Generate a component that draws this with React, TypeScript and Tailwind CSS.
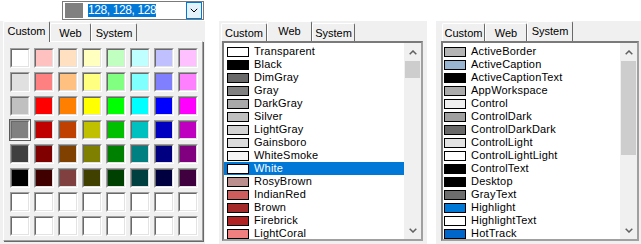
import React from "react";

const W = "#ffffff";
const customRows: string[][] = [
  ["#ffffff", "#ffc0c0", "#ffe0c0", "#ffffc0", "#c0ffc0", "#c0ffff", "#c0c0ff", "#ffc0ff"],
  ["#e0e0e0", "#ff8080", "#ffc080", "#ffff80", "#80ff80", "#80ffff", "#8080ff", "#ff80ff"],
  ["#c0c0c0", "#ff0000", "#ff8000", "#ffff00", "#00ff00", "#00ffff", "#0000ff", "#ff00ff"],
  ["#808080", "#c00000", "#c04000", "#c0c000", "#00c000", "#00c0c0", "#0000c0", "#c000c0"],
  ["#404040", "#800000", "#804000", "#808000", "#008000", "#008080", "#000080", "#800080"],
  ["#000000", "#400000", "#804040", "#404000", "#004000", "#004040", "#000040", "#400040"],
  [W, W, W, W, W, W, W, W],
  [W, W, W, W, W, W, W, W],
];

const webColors: [string, string][] = [
  ["Transparent", "#ffffff"],
  ["Black", "#000000"],
  ["DimGray", "#696969"],
  ["Gray", "#808080"],
  ["DarkGray", "#a9a9a9"],
  ["Silver", "#c0c0c0"],
  ["LightGray", "#d3d3d3"],
  ["Gainsboro", "#dcdcdc"],
  ["WhiteSmoke", "#f5f5f5"],
  ["White", "#ffffff"],
  ["RosyBrown", "#bc8f8f"],
  ["IndianRed", "#cd5c5c"],
  ["Brown", "#a52a2a"],
  ["Firebrick", "#b22222"],
  ["LightCoral", "#f08080"],
];

const sysColors: [string, string][] = [
  ["ActiveBorder", "#b4b4b4"],
  ["ActiveCaption", "#99b4d1"],
  ["ActiveCaptionText", "#000000"],
  ["AppWorkspace", "#ababab"],
  ["Control", "#f0f0f0"],
  ["ControlDark", "#a0a0a0"],
  ["ControlDarkDark", "#696969"],
  ["ControlLight", "#e3e3e3"],
  ["ControlLightLight", "#ffffff"],
  ["ControlText", "#000000"],
  ["Desktop", "#000000"],
  ["GrayText", "#6d6d6d"],
  ["Highlight", "#0078d7"],
  ["HighlightText", "#ffffff"],
  ["HotTrack", "#0066cc"],
];

function Tab({ label, selected, cls }: { label: string; selected?: boolean; cls: string }) {
  if (selected) {
    return (
      <div
        className={`${cls} relative z-10 bg-[#f0f0f0] border-t border-l border-white border-r border-r-[#696969] rounded-t-[2px] text-center pt-[3px] text-[11px] leading-[13px] text-black`}
      >
        {label}
      </div>
    );
  }
  return (
    <div
      className={`${cls} h-[18px] bg-[#f0f0f0] border-t border-l border-white border-r border-r-[#696969] rounded-t-[2px] text-center pt-[3px] text-[11px] leading-[13px] text-black`}
    >
      {label}
    </div>
  );
}

function Swatch({ c, sel }: { c: string; sel?: boolean }) {
  return (
    <div
      className={`w-[20px] h-[20px] border-t border-l border-[#a0a0a0] border-b-white border-r-white border-b border-r ${
        sel ? "outline outline-1 outline-[#5a5a5a]" : ""
      }`}
    >
      <div
        className="w-full h-full border-t border-l border-[#696969] border-b border-r border-b-[#e3e3e3] border-r-[#e3e3e3]"
        style={{ background: c }}
      />
    </div>
  );
}

function Chevron({ dir }: { dir: "up" | "down" }) {
  return (
    <svg width="8" height="5" viewBox="0 0 8 5">
      <polyline
        points={dir === "up" ? "0.7,4.3 4,1 7.3,4.3" : "0.7,0.7 4,4 7.3,0.7"}
        fill="none"
        stroke="#606060"
        strokeWidth="1.5"
      />
    </svg>
  );
}

function Scrollbar({ thumbCls }: { thumbCls: string }) {
  return (
    <div className="w-[17px] h-full flex flex-col bg-[#f0f0f0] shrink-0">
      <div className="h-[18px] flex items-center justify-center">
        <Chevron dir="up" />
      </div>
      <div className={`${thumbCls} mx-[1px] bg-[#cdcdcd]`} />
      <div className="flex-1" />
      <div className="h-[17px] flex items-center justify-center">
        <Chevron dir="down" />
      </div>
    </div>
  );
}

function ListItem({ name, c, sel, pad }: { name: string; c: string; sel?: boolean; pad: string }) {
  return (
    <div className={`h-[13px] flex items-center ${pad} ${sel ? "bg-[#0078d7] text-white" : "text-black"}`}>
      <div className="w-[22px] h-[10px] border border-black shrink-0" style={{ background: c }} />
      <span className="ml-[5px] text-[11px] leading-[13px] tracking-[0.2px] whitespace-nowrap">{name}</span>
    </div>
  );
}

export default function App() {
  return (
    <div className="w-[641px] h-[244px] bg-white flex overflow-hidden font-['Liberation_Sans',Arial,sans-serif]">
      {/* Panel 1: Custom */}
      <div className="w-[205px] flex flex-col shrink-0">
        <div className="h-[21px] pl-[62px] pt-[1px]">
          <div className="w-[142px] h-[19px] border border-[#7a7a7a] bg-white flex items-center">
            <div className="ml-[2px] w-[18px] h-[15px] bg-[#808080] shrink-0" />
            <div className="ml-[5px] w-[68px] h-[13px] bg-[#0078d7] shrink-0 overflow-hidden text-white text-[12px] leading-[13px] tracking-[-0.4px] whitespace-nowrap">
              128, 128, 128
            </div>
            <div className="flex-1" />
            <div className="w-[16px] h-[17px] mr-[1px] border border-[#0078d7] bg-[#e5f1fb] flex items-center justify-center shrink-0">
              <svg width="8" height="5" viewBox="0 0 8 5">
                <polyline points="0.8,0.8 4,4 7.2,0.8" fill="none" stroke="#000" strokeWidth="1" />
              </svg>
            </div>
          </div>
        </div>
        <div className="flex-1 bg-[#f0f0f0]">
          <div className="h-[20px] pl-[3px] flex items-end">
            <Tab label="Custom" selected cls="w-[47px] h-[21px] -mb-px" />
            <Tab label="Web" cls="w-[41px]" />
            <Tab label="System" cls="w-[46px]" />
          </div>
          <div className="ml-[3px] w-[200px] h-[200px] border-t border-l border-white border-r border-b border-r-[#a0a0a0] border-b-[#a0a0a0] shadow-[1px_1px_0_#696969] pl-[6px] pt-[6px]">
            <div className="grid grid-cols-8 gap-[4px] w-max">
              {customRows.map((row, ri) =>
                row.map((c, ci) => <Swatch key={`${ri}-${ci}`} c={c} sel={ri === 3 && ci === 0} />)
              )}
            </div>
          </div>
        </div>
      </div>

      {/* Panel 2: Web */}
      <div className="ml-[14px] mt-[21px] w-[208px] h-[223px] bg-[#f0f0f0] shrink-0">
        <div className="h-[20px] pl-[2px] flex items-end">
          <Tab label="Custom" cls="w-[46px]" />
          <Tab label="Web" selected cls="w-[45px] h-[20px]" />
          <Tab label="System" cls="w-[43px]" />
        </div>
        <div className="ml-[3px] w-[201px] h-[200px] border-2 border-[#7a7a7a] border-b-[#a0a0a0] border-r-[#a0a0a0] bg-white flex">
          <div className="w-[180px] pt-[2px] overflow-hidden">
            {webColors.map(([n, c]) => (
              <ListItem key={n} name={n} c={c} sel={n === "White"} pad="pl-[3px]" />
            ))}
          </div>
          <Scrollbar thumbCls="h-[17px]" />
        </div>
      </div>

      {/* Panel 3: System */}
      <div className="ml-[9px] mt-[21px] w-[205px] h-[223px] bg-[#f0f0f0] shrink-0">
        <div className="h-[20px] pl-[6px] flex items-end">
          <Tab label="Custom" cls="w-[43px]" />
          <Tab label="Web" cls="w-[42px]" />
          <Tab label="System" selected cls="w-[46px] h-[20px]" />
        </div>
        <div className="ml-[5px] w-[198px] h-[200px] border-2 border-[#7a7a7a] border-b-[#a0a0a0] border-r-[#a0a0a0] bg-white flex">
          <div className="w-[177px] pt-[2px] overflow-hidden">
            {sysColors.map(([n, c]) => (
              <ListItem key={n} name={n} c={c} pad="pl-[1px]" />
            ))}
          </div>
          <Scrollbar thumbCls="h-[94px]" />
        </div>
      </div>
    </div>
  );
}
